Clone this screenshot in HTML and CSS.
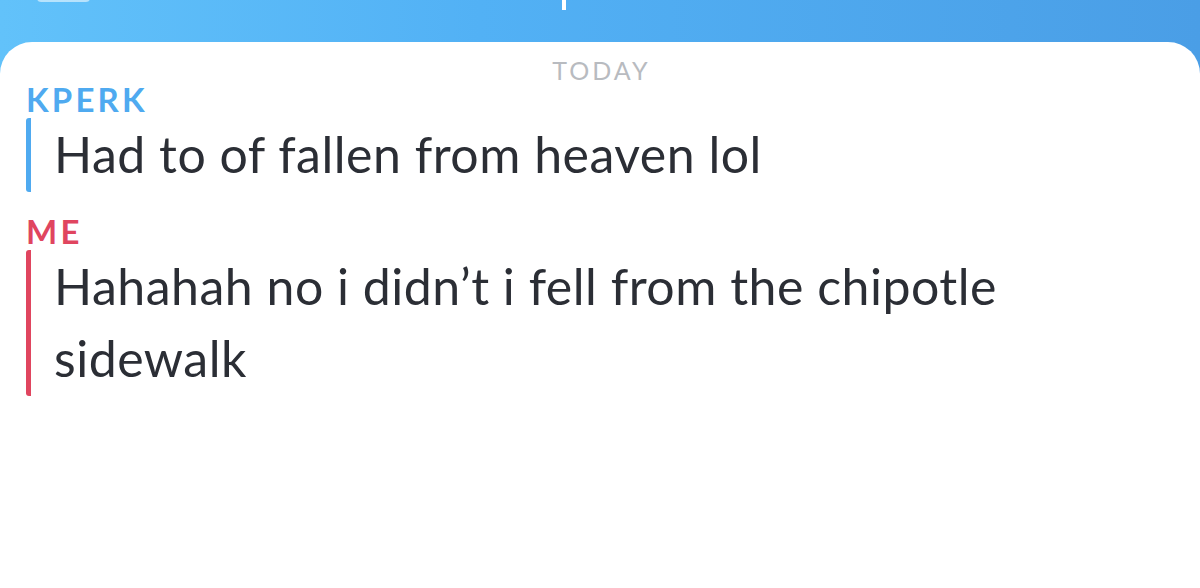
FILE: index.html
```html
<!DOCTYPE html>
<html>
<head>
<meta charset="utf-8">
<link rel="stylesheet" href="styles.css">
</head>
<body>
<div class="screen">
  <header class="topbar">
    <div class="tab-box"></div>
    <div class="cursor"></div>
  </header>
  <main class="card">
    <div class="day">TODAY</div>
    <section class="group">
      <div class="sender sender-them">KPERK</div>
      <div class="msg msg-them"><div class="msg-text">Had to of fallen from heaven lol</div></div>
    </section>
    <section class="group">
      <div class="sender sender-me">ME</div>
      <div class="msg msg-me"><div class="msg-text">Hahahah no i didn’t i fell from the chipotle sidewalk</div></div>
    </section>
  </main>
</div>
</body>
</html>
```
FILE: styles.css
```css
* { box-sizing: border-box; }
html, body { margin: 0; padding: 0; }
body {
  width: 1200px;
  height: 588px;
  overflow: hidden;
  font-family: "Lato", "Noto Sans", sans-serif;
}
.screen {
  height: 588px;
  display: flex;
  flex-direction: column;
  background: linear-gradient(90deg, #62c2fa 0%, #52b1f5 40%, #4a9ee6 100%);
}
.topbar {
  height: 42px;
  flex: none;
  display: flex;
  align-items: flex-start;
}
.tab-box {
  width: 53px;
  height: 20px;
  margin-left: 37px;
  margin-top: -18px;
  border: 2px solid rgba(255,255,255,0.55);
  border-radius: 4px;
}
.cursor {
  width: 4px;
  height: 10px;
  margin-left: 472px;
  background: #ffffff;
}
.card {
  flex: 1;
  background: #ffffff;
  border-radius: 32px 32px 0 0;
  padding: 15px 26px 0 26px;
  color: #2b2e35;
}
.day {
  text-align: center;
  font-size: 25px;
  letter-spacing: 3px;
  color: #b8bbc0;
  line-height: 26px;
  padding-left: 3px;
}
.group { margin-top: -1px; }
.group + .group { margin-top: 22px; }
.sender {
  font-size: 33px;
  font-weight: 700;
  letter-spacing: 3.2px;
  line-height: 34px;
}
.sender-them { color: #4faaf0; }
.sender-me { color: #e0455f; }
.msg {
  margin-top: 11px;
  padding-left: 23px;
  padding-bottom: 2px;
  width: 1010px;
  border-left: 5px solid;
  border-radius: 3px;
}
.msg-text {
  margin-top: -9px;
  font-size: 50px;
  line-height: 72px;
  letter-spacing: 0.5px;
}
.msg-them { border-color: #4faaf0; }
.msg-me { border-color: #e0455f; }
```
